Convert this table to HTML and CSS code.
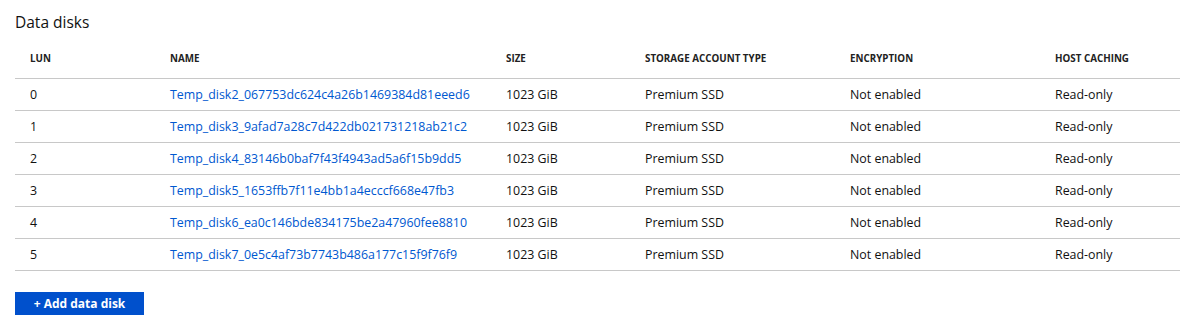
FILE: index.html
```html
<!DOCTYPE html>
<html lang="en">
<head>
    <meta charset="UTF-8">
    <title>Data disks</title>
    <link rel="stylesheet" href="styles.css">
</head>
<body>
    <div class="section">
        <h2 class="title">Data disks</h2>

        <table class="disks">
            <colgroup>
                <col class="c-lun">
                <col class="c-name">
                <col class="c-size">
                <col class="c-type">
                <col class="c-enc">
                <col>
            </colgroup>
            <thead>
                <tr>
                    <th>LUN</th>
                    <th>Name</th>
                    <th>Size</th>
                    <th>Storage account type</th>
                    <th>Encryption</th>
                    <th>Host caching</th>
                </tr>
            </thead>
            <tbody>
                <tr>
                    <td>0</td>
                    <td><a href="#">Temp_disk2_067753dc624c4a26b1469384d81eeed6</a></td>
                    <td>1023 GiB</td>
                    <td>Premium SSD</td>
                    <td>Not enabled</td>
                    <td>Read-only</td>
                </tr>
                <tr>
                    <td>1</td>
                    <td><a href="#">Temp_disk3_9afad7a28c7d422db021731218ab21c2</a></td>
                    <td>1023 GiB</td>
                    <td>Premium SSD</td>
                    <td>Not enabled</td>
                    <td>Read-only</td>
                </tr>
                <tr>
                    <td>2</td>
                    <td><a href="#">Temp_disk4_83146b0baf7f43f4943ad5a6f15b9dd5</a></td>
                    <td>1023 GiB</td>
                    <td>Premium SSD</td>
                    <td>Not enabled</td>
                    <td>Read-only</td>
                </tr>
                <tr>
                    <td>3</td>
                    <td><a href="#">Temp_disk5_1653ffb7f11e4bb1a4ecccf668e47fb3</a></td>
                    <td>1023 GiB</td>
                    <td>Premium SSD</td>
                    <td>Not enabled</td>
                    <td>Read-only</td>
                </tr>
                <tr>
                    <td>4</td>
                    <td><a href="#">Temp_disk6_ea0c146bde834175be2a47960fee8810</a></td>
                    <td>1023 GiB</td>
                    <td>Premium SSD</td>
                    <td>Not enabled</td>
                    <td>Read-only</td>
                </tr>
                <tr>
                    <td>5</td>
                    <td><a href="#">Temp_disk7_0e5c4af73b7743b486a177c15f9f76f9</a></td>
                    <td>1023 GiB</td>
                    <td>Premium SSD</td>
                    <td>Not enabled</td>
                    <td>Read-only</td>
                </tr>
            </tbody>
        </table>

        <button class="add-btn">+ Add data disk</button>
    </div>
</body>
</html>
```

FILE: styles.css
```css
/* General Reset */
* {
    margin: 0;
    padding: 0;
    box-sizing: border-box;
    font-family: 'Open Sans', sans-serif;
}

body {
    background: #fff;
    color: #000;
}

.section {
    padding: 12px 0 0 15px;
}

.title {
    font-size: 15.5px;
    font-weight: normal;
    line-height: 20px;
    color: #111;
}

/* Table */
.disks {
    width: 100%;
    margin-top: 8px;
    border-collapse: collapse;
    table-layout: fixed;
}

.c-lun { width: 140px; }
.c-name { width: 336px; }
.c-size { width: 139px; }
.c-type { width: 205px; }
.c-enc { width: 205px; }

.disks th {
    text-align: left;
    font-size: 9.8px;
    font-weight: bold;
    text-transform: uppercase;
    height: 38px;
    padding-left: 15px;
    color: #222;
    border-bottom: 1px solid #c8c8c8;
}

.disks td {
    font-size: 12.4px;
    height: 32px;
    padding-left: 15px;
    white-space: nowrap;
    color: #111;
    border-bottom: 1px solid #c8c8c8;
}

.disks a {
    color: #0058d0;
    text-decoration: none;
}

/* Add button */
.add-btn {
    margin-top: 21px;
    width: 129px;
    height: 23px;
    background: #0050cc;
    color: #fff;
    border: none;
    font-size: 12px;
    font-weight: bold;
    cursor: pointer;
}
```
